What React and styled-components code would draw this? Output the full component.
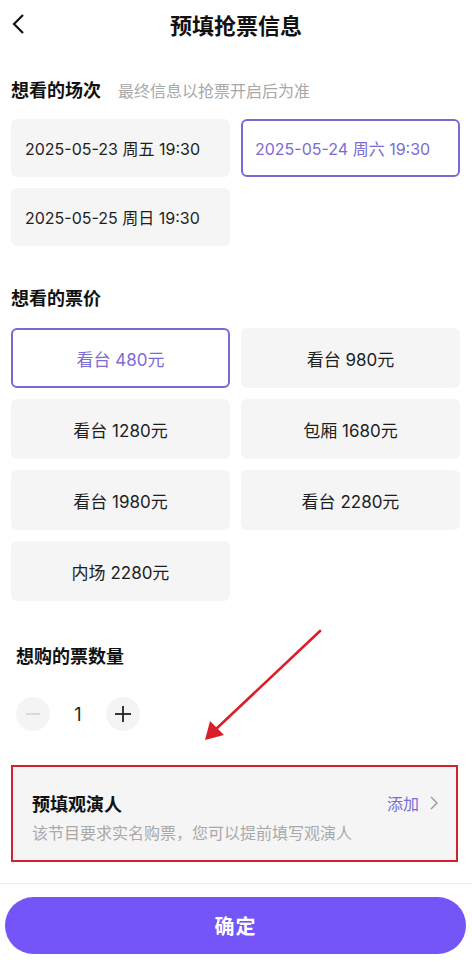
import React, { useState } from "react";
import styled, { createGlobalStyle } from "styled-components";

const GlobalStyle = createGlobalStyle`
  html, body {
    margin: 0;
    padding: 0;
    background: #fff;
    font-family: "Inter", "Noto Sans CJK SC", sans-serif;
    color: #1a1a1a;
  }
`;

const Page = styled.div`
  position: relative;
  width: 472px;
  height: 973px;
  overflow: hidden;
  background: #fff;
`;

const Header = styled.div`
  position: relative;
  height: 48px;
  display: flex;
  align-items: center;
  justify-content: center;
`;

const Back = styled.button`
  position: absolute;
  left: 4px;
  top: 10px;
  width: 28px;
  height: 28px;
  padding: 0;
  border: 0;
  background: none;
  display: flex;
  align-items: center;
  justify-content: center;
`;

const Title = styled.div`
  font-size: 22px;
  font-weight: 600;
  color: #111;
`;

const Section = styled.div`
  padding: ${p => p.$pad || "0 12px 0 11px"};
  margin-top: ${p => p.$top || 0}px;
`;

const SectionHead = styled.div`
  display: flex;
  align-items: baseline;
  gap: 17px;
  height: 24px;
  line-height: 24px;
`;

const HeadText = styled.span`
  font-size: 18px;
  font-weight: 600;
  color: #111;
`;

const HeadNote = styled.span`
  font-size: 16px;
  color: #a8a8a8;
`;

const Grid = styled.div`
  display: grid;
  grid-template-columns: 1fr 1fr;
  gap: 11px;
  margin-top: ${p => p.$top}px;
`;

const Option = styled.div`
  box-sizing: border-box;
  height: ${p => p.$h}px;
  border-radius: 6px;
  display: flex;
  align-items: center;
  justify-content: ${p => (p.$center ? "center" : "flex-start")};
  padding: 0 12px;
  font-size: ${p => p.$fs}px;
  background: ${p => (p.$active ? "#fff" : "#f5f5f5")};
  border: 2px solid ${p => (p.$active ? "#7a68d6" : "#f5f5f5")};
  color: ${p => (p.$active ? "#7b6cd4" : "#1e1e1e")};
  cursor: pointer;
`;

const Stepper = styled.div`
  display: flex;
  align-items: center;
  margin-top: 28px;
`;

const StepBtn = styled.div`
  width: 34px;
  height: 34px;
  border-radius: 50%;
  background: #f4f4f4;
  display: flex;
  align-items: center;
  justify-content: center;
`;

const Count = styled.span`
  width: 56px;
  text-align: center;
  font-size: 18px;
  color: #222;
`;

const ViewerCard = styled.div`
  box-sizing: border-box;
  margin: 34px 14px 0 11px;
  height: 97px;
  border: 2px solid #d2222d;
  background: #f5f5f5;
  padding: 23px 18px 0 19px;
`;

const ViewerRow = styled.div`
  display: flex;
  align-items: center;
  justify-content: space-between;
  height: 26px;
`;

const ViewerTitle = styled.span`
  font-size: 18px;
  font-weight: 600;
  color: #111;
`;

const AddLink = styled.span`
  display: flex;
  align-items: center;
  gap: 11px;
  font-size: 16px;
  color: #7b6cd4;
`;

const ViewerNote = styled.div`
  margin-top: 4px;
  font-size: 16px;
  color: #a9a9a9;
`;

const Footer = styled.div`
  margin-top: 21px;
  border-top: 1px solid #ececec;
  padding: 13px 6px 0 5px;
`;

const Confirm = styled.button`
  width: 100%;
  height: 57px;
  border: 0;
  border-radius: 29px;
  background: #7455f7;
  color: #fff;
  font-family: inherit;
  font-size: 20px;
  font-weight: 600;
  letter-spacing: 1px;
`;

const Annotation = styled.svg`
  position: absolute;
  left: 0;
  top: 0;
  pointer-events: none;
`;

const sessions = ["2025-05-23 周五 19:30", "2025-05-24 周六 19:30", "2025-05-25 周日 19:30"];
const prices = ["看台 480元", "看台 980元", "看台 1280元", "包厢 1680元", "看台 1980元", "看台 2280元", "内场 2280元"];

export default function App() {
  const [session, setSession] = useState(1);
  const [price, setPrice] = useState(0);
  const [count, setCount] = useState(1);

  return (
    <Page>
      <GlobalStyle />
      <Header>
        <Back>
          <svg width="20" height="22" viewBox="0 0 20 22">
            <polyline points="15,2 6,11 15,20" fill="none" stroke="#111" strokeWidth="2.2" />
          </svg>
        </Back>
        <Title>预填抢票信息</Title>
      </Header>

      <Section $top={31}>
        <SectionHead>
          <HeadText>想看的场次</HeadText>
          <HeadNote>最终信息以抢票开启后为准</HeadNote>
        </SectionHead>
        <Grid $top={16}>
          {sessions.map((s, i) => (
            <Option key={s} $h={58} $fs={16} $active={i === session} onClick={() => setSession(i)}>
              {s}
            </Option>
          ))}
        </Grid>
      </Section>

      <Section $top={41}>
        <SectionHead>
          <HeadText>想看的票价</HeadText>
        </SectionHead>
        <Grid $top={17}>
          {prices.map((p, i) => (
            <Option key={i} $h={60} $fs={17} $center $active={i === price} onClick={() => setPrice(i)}>
              {p}
            </Option>
          ))}
        </Grid>
      </Section>

      <Section $top={44} $pad="0 16px">
        <SectionHead>
          <HeadText>想购的票数量</HeadText>
        </SectionHead>
        <Stepper>
          <StepBtn onClick={() => setCount(Math.max(1, count - 1))}>
            <svg width="16" height="16" viewBox="0 0 16 16">
              <line x1="1" y1="8" x2="15" y2="8" stroke="#d6d6d6" strokeWidth="1.8" />
            </svg>
          </StepBtn>
          <Count>{count}</Count>
          <StepBtn onClick={() => setCount(count + 1)}>
            <svg width="18" height="18" viewBox="0 0 18 18">
              <line x1="1" y1="9" x2="17" y2="9" stroke="#222" strokeWidth="1.8" />
              <line x1="9" y1="1" x2="9" y2="17" stroke="#222" strokeWidth="1.8" />
            </svg>
          </StepBtn>
        </Stepper>
      </Section>

      <ViewerCard>
        <ViewerRow>
          <ViewerTitle>预填观演人</ViewerTitle>
          <AddLink>
            添加
            <svg width="8" height="14" viewBox="0 0 8 14">
              <polyline points="1,1 7,7 1,13" fill="none" stroke="#999" strokeWidth="1.4" />
            </svg>
          </AddLink>
        </ViewerRow>
        <ViewerNote>该节目要求实名购票，您可以提前填写观演人</ViewerNote>
      </ViewerCard>

      <Footer>
        <Confirm>确定</Confirm>
      </Footer>

      <Annotation width="472" height="973" viewBox="0 0 472 973">
        <line x1="320" y1="631" x2="215" y2="730" stroke="#d9202a" strokeWidth="2.6" strokeLinecap="round" />
        <polygon points="205,740 210,721 224,735" fill="#d9202a" />
      </Annotation>
    </Page>
  );
}
